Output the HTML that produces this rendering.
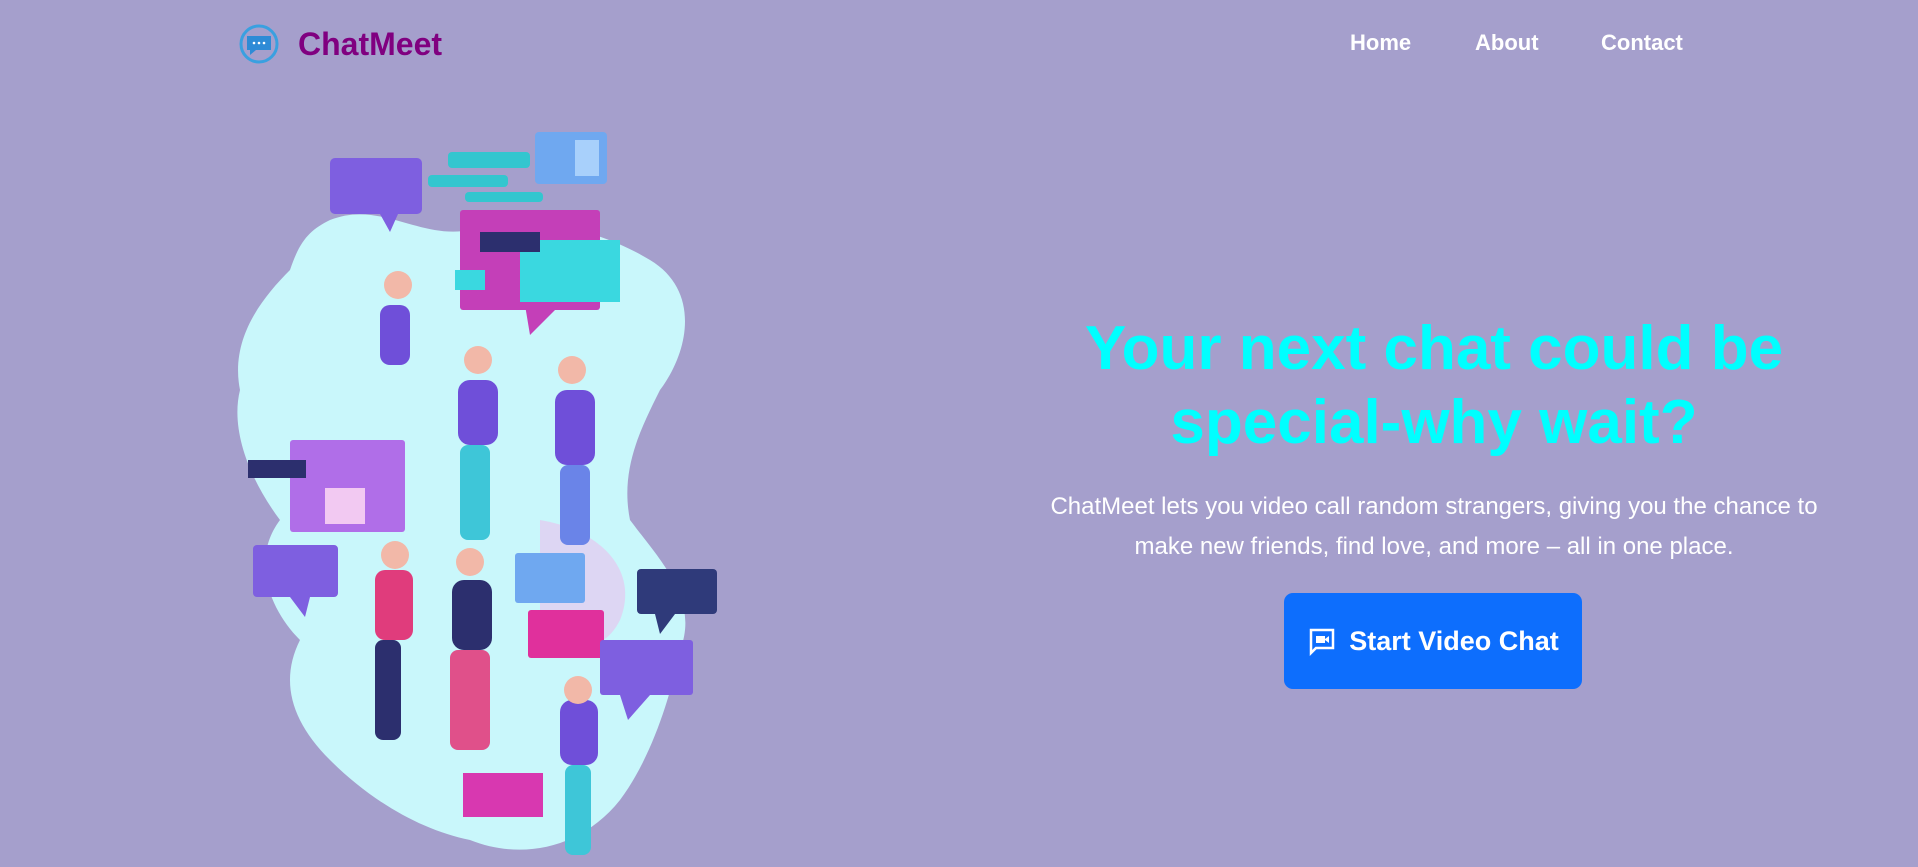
<!DOCTYPE html>
<html><head><meta charset="utf-8"><style>
*{margin:0;padding:0;box-sizing:border-box}
html,body{width:1918px;height:867px;overflow:hidden;background:#a59fcc;font-family:"Liberation Sans","DejaVu Sans",sans-serif}
.logo{position:absolute;left:238px;top:20px;display:flex;align-items:center}
.logo span{margin-left:18px;font-size:32px;font-weight:bold;color:#800080}
.nav a{position:absolute;top:30px;font-size:22px;font-weight:bold;color:#fff;text-decoration:none}
h1{position:absolute;left:959px;width:950px;top:312px;text-align:center;font-size:62px;line-height:74px;color:#0ff;font-weight:bold}
p{position:absolute;left:1009px;width:850px;top:487px;text-align:center;font-size:24px;line-height:40px;color:#fff}
.btn{position:absolute;left:1284px;top:593px;width:298px;height:96px;background:#0d6efd;border-radius:9px;color:#fff;font-size:27px;font-weight:bold;display:flex;align-items:center;justify-content:center}
.btn svg{margin-right:12px}
</style></head><body>
<div class="logo">
<svg width="42" height="48" viewBox="0 0 42 48"><circle cx="21" cy="24" r="18" fill="none" stroke="#3aa0e0" stroke-width="3"/><path d="M9 16h24v14H18l-6 5v-5H9z" fill="#2e8bd6"/><circle cx="16" cy="23" r="1.3" fill="#fff"/><circle cx="21" cy="23" r="1.3" fill="#fff"/><circle cx="26" cy="23" r="1.3" fill="#fff"/></svg>
<span>ChatMeet</span></div>
<div class="nav"><a style="left:1350px">Home</a><a style="left:1475px">About</a><a style="left:1601px">Contact</a></div>
<svg style="position:absolute;left:0;top:0" width="760" height="867" viewBox="0 0 760 867">
<path d="M330 220 C380 200 420 240 470 230 C540 215 600 230 650 260 C700 290 690 350 660 390 C640 430 620 470 630 520 C660 560 700 600 680 650 C670 700 650 760 620 800 C580 850 520 860 470 840 C420 830 370 800 330 760 C290 720 280 680 300 640 C270 610 250 560 280 520 C250 480 230 430 240 390 C230 340 260 300 290 270 C300 240 310 230 330 220Z" fill="#c9f7fb"/>
<path d="M540 520 C600 530 640 570 620 620 C600 660 560 650 540 610Z" fill="#e6c8f0" opacity=".7"/>
<rect x="330" y="158" width="92" height="56" rx="5" fill="#7e5fe0"/><path d="M380 214l10 18 8-18z" fill="#7e5fe0"/>
<rect x="448" y="152" width="82" height="16" rx="4" fill="#33c6cf"/><rect x="428" y="175" width="80" height="12" rx="4" fill="#33c6cf"/><rect x="465" y="192" width="78" height="10" rx="4" fill="#33c6cf"/>
<rect x="535" y="132" width="72" height="52" rx="4" fill="#6fa8f0"/><rect x="575" y="140" width="24" height="36" fill="#a8d0fb"/>
<rect x="460" y="210" width="140" height="100" rx="3" fill="#c43fb8"/><path d="M525 305l5 30 30-30z" fill="#c43fb8"/>
<rect x="520" y="240" width="100" height="62" fill="#3ad8e0"/><rect x="480" y="232" width="60" height="20" fill="#2c2f6e"/><rect x="455" y="270" width="30" height="20" fill="#3ad8e0"/>
<rect x="290" y="440" width="115" height="92" rx="3" fill="#b06ee8"/><rect x="248" y="460" width="58" height="18" fill="#2c2f6e"/><rect x="325" y="488" width="40" height="36" fill="#f2c9f2"/>
<rect x="253" y="545" width="85" height="52" rx="4" fill="#7e5fe0"/><path d="M290 597l15 20 5-20z" fill="#7e5fe0"/>
<rect x="515" y="553" width="70" height="50" rx="3" fill="#6fa8f0"/><rect x="528" y="610" width="76" height="48" rx="3" fill="#e0309c"/>
<rect x="637" y="569" width="80" height="45" rx="4" fill="#2f3a7a"/><path d="M655 614l5 20 15-20z" fill="#2f3a7a"/>
<rect x="600" y="640" width="93" height="55" rx="3" fill="#7e5fe0"/><path d="M620 695l8 25 22-25z" fill="#7e5fe0"/>
<rect x="463" y="773" width="80" height="44" fill="#d838b0"/>
<g fill="#6f4fd9"><rect x="380" y="305" width="30" height="60" rx="10"/><rect x="458" y="380" width="40" height="65" rx="12"/><rect x="555" y="390" width="40" height="75" rx="12"/><rect x="375" y="570" width="38" height="70" rx="10" fill="#e03c7c"/><rect x="452" y="580" width="40" height="70" rx="12" fill="#2c2f6e"/><rect x="560" y="700" width="38" height="65" rx="12"/></g>
<g fill="#3ec6d8"><rect x="460" y="445" width="30" height="95" rx="8"/><rect x="560" y="465" width="30" height="80" rx="8" fill="#6a84e8"/><rect x="375" y="640" width="26" height="100" rx="8" fill="#2c2f6e"/><rect x="450" y="650" width="40" height="100" rx="8" fill="#e0508a"/><rect x="565" y="765" width="26" height="90" rx="8"/></g>
<circle cx="398" cy="285" r="14" fill="#f2b8a8"/><circle cx="478" cy="360" r="14" fill="#f2b8a8"/><circle cx="572" cy="370" r="14" fill="#f2b8a8"/><circle cx="395" cy="555" r="14" fill="#f2b8a8"/><circle cx="470" cy="562" r="14" fill="#f2b8a8"/><circle cx="578" cy="690" r="14" fill="#f2b8a8"/>
</svg>
<h1>Your next chat could be<br>special-why wait?</h1>
<p>ChatMeet lets you video call random strangers, giving you the chance to<br>make new friends, find love, and more – all in one place.</p>
<div class="btn"><svg width="30" height="30" viewBox="0 0 30 30"><path d="M4 4h22v18H9l-5 5z" fill="none" stroke="#fff" stroke-width="2.5"/><rect x="9" y="10" width="9" height="7" fill="#fff"/><path d="M18 13l4-3v7l-4-3z" fill="#fff"/></svg>Start Video Chat</div>
</body></html>
